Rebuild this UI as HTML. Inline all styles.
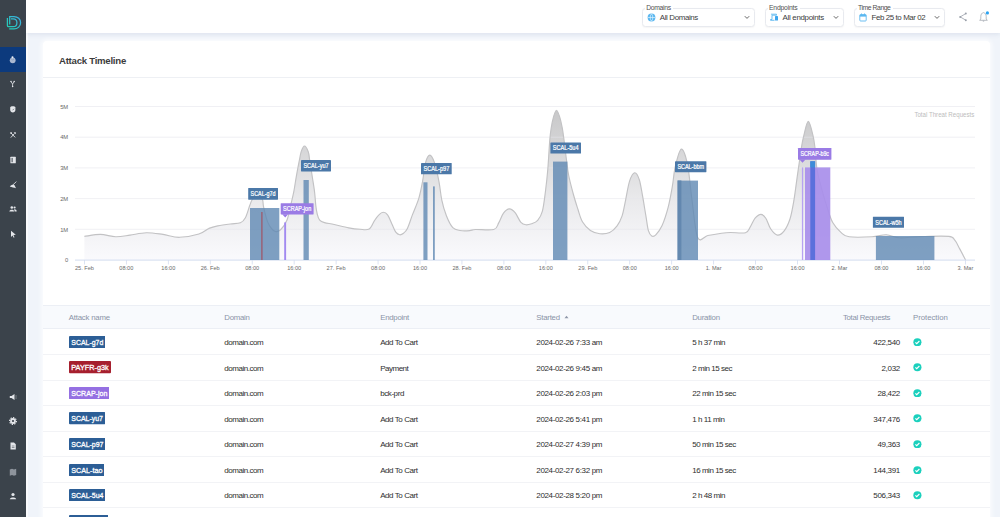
<!DOCTYPE html>
<html><head><meta charset="utf-8">
<style>
*{box-sizing:border-box;margin:0;padding:0}
html,body{width:1000px;height:517px;overflow:hidden;background:#f0f4fa;font-family:"Liberation Sans",sans-serif;color:#333}
.abs{position:absolute}
#side{left:0;top:0;width:26px;height:517px;background:#3b434b}
#active{left:0;top:47px;width:26px;height:25px;background:#0c3a7d}
#header{left:26px;top:0;width:974px;height:33px;background:#fff;box-shadow:0 1px 5px rgba(60,80,130,0.12)}
#card{left:43px;top:41px;width:947px;height:520px;background:#fff;border-radius:4px;box-shadow:0 0 4px 2px rgba(255,255,255,0.7)}
.sel{position:absolute;top:8px;height:18px;border:1px solid #e8e8ec;border-radius:3px;background:#fff}
.sel .lab{position:absolute;top:-5px;left:4px;font-size:6px;line-height:7px;color:#555;background:#fff;padding:0 1px}
.sel .val{position:absolute;top:4px;font-size:7.3px;line-height:9px;color:#444}
.chev{position:absolute;top:6.5px;width:4px;height:4px;border-right:1px solid #555;border-bottom:1px solid #555;transform:rotate(45deg)}
#title{left:59px;top:55px;font-size:9.6px;font-weight:bold;color:#3c3c3c;letter-spacing:-0.25px;line-height:12px}
#div1{left:43px;top:77px;width:947px;height:1px;background:#eef0f4}
#thead{left:43px;top:305px;width:947px;height:24px;background:#f8fafd;border-top:1px solid #eceff5;border-bottom:1px solid #eceff5}
.th{position:absolute;top:312px;font-size:7.3px;line-height:9px;color:#8d95a8}
.row{position:absolute;left:43px;width:947px;height:1px;background:#f2f3f6}
.td{position:absolute;font-size:7.1px;line-height:9px;color:#3a3a3a}
.badge{position:absolute;left:68.4px;height:12.6px;border-radius:1.5px;color:#fff;font-weight:bold;font-size:7.1px;line-height:12.6px;padding:0 2.6px;letter-spacing:-0.25px}
.b1{background:#2c5f96}.b2{background:#a3202e}.b3{background:#9270de}
.chk{position:absolute;left:913px;width:8px;height:8px;border-radius:50%;background:#21c7b3}
</style></head><body>
<div class="abs" style="left:26px;top:0;width:2px;height:517px;background:#fafbfd"></div>
<div id="side" class="abs"></div>
<div id="active" class="abs"></div>
<svg class="abs" style="left:0;top:0" width="26" height="33" viewBox="0 0 26 33"><defs><linearGradient id="lg" x1="6" y1="29" x2="21" y2="16" gradientUnits="userSpaceOnUse"><stop offset="0" stop-color="#1fd0ae"/><stop offset="1" stop-color="#3eaee8"/></linearGradient></defs><g fill="none" stroke="url(#lg)" stroke-width="1.25"><path d="M9.7,24.6 V16.5 H14 C17.8,16.5 20.6,19.3 20.6,22.7 C20.6,26.2 17.8,28.9 14,28.9 H9.2"/><path d="M7.4,18 V25.4 Q7.4,26.7 8.7,26.7 H13.2 C15.4,26.7 16.9,24.9 16.9,22.7 C16.9,20.5 15.4,18.8 13.2,18.8 H11"/></g></svg>
<svg class="abs" style="left:8px;top:55.0px" width="10" height="10" viewBox="0 0 10 10"><circle cx="4.7" cy="5.3" r="2.9" fill="#aab8d0"/><path d="M3.4,3.9 L4.7,5.3 L6,3.9" stroke="#7f90b0" stroke-width="0.5" fill="none"/><circle cx="4.5" cy="2.2" r="1" fill="#f0f3f8"/></svg>
<svg class="abs" style="left:8px;top:79.0px" width="10" height="10" viewBox="0 0 10 10"><path d="M3,2.6 L4.6,5 L6.2,2.6 M4.6,5 V7.4" stroke="#e4e6ea" stroke-width="0.8" fill="none"/><circle cx="3" cy="2.5" r="0.75" fill="#e4e6ea"/><circle cx="6.2" cy="2.5" r="0.75" fill="#e4e6ea"/><circle cx="4.6" cy="7.5" r="0.75" fill="#e4e6ea"/></svg>
<svg class="abs" style="left:8px;top:104.0px" width="10" height="10" viewBox="0 0 10 10"><path d="M2.2,3.6 C2.2,1.8 7.4,1.8 7.4,3.6 V5.8 C7.4,7.6 6.2,8.4 4.8,8.4 C3.4,8.4 2.2,7.6 2.2,5.8 Z" fill="#e4e6ea"/><path d="M4.5,6.3 L6,4.8" stroke="#3b434b" stroke-width="0.6"/></svg>
<svg class="abs" style="left:8px;top:129.5px" width="10" height="10" viewBox="0 0 10 10"><path d="M2.8,7.6 L6.6,3.4 M3,3 L7.2,7.4" stroke="#e4e6ea" stroke-width="0.9"/><path d="M5.6,2.2 L7.8,2.2 L7.8,4.2 Z" fill="#e4e6ea"/><path d="M1.9,2.8 L3.4,1.9 L4.2,3.2 L2.8,4 Z" fill="#e4e6ea"/></svg>
<svg class="abs" style="left:8px;top:154.8px" width="10" height="10" viewBox="0 0 10 10"><rect x="2.4" y="1.8" width="5.4" height="6.4" rx="0.5" fill="#e4e6ea"/><rect x="3.6" y="2.9" width="1" height="4.3" fill="#3b434b"/></svg>
<svg class="abs" style="left:8px;top:179.5px" width="10" height="10" viewBox="0 0 10 10"><path d="M1.8,6.6 C3,4.8 4.8,4.4 6.4,5 L8,8.2 C6,7.6 4,7.4 1.8,6.6 Z" fill="#e4e6ea"/><path d="M4.6,5.2 L8.4,1.6" stroke="#e4e6ea" stroke-width="0.8"/></svg>
<svg class="abs" style="left:8px;top:204.0px" width="10" height="10" viewBox="0 0 10 10"><circle cx="3.8" cy="3.5" r="1.3" fill="#e4e6ea"/><circle cx="6.6" cy="3.5" r="1.1" fill="#e4e6ea"/><path d="M1.3,7.6 C1.5,5.2 6.1,5.2 6.3,7.6 Z M6,5.3 C7.5,5 8.7,5.8 8.7,7.6 H6.8 Z" fill="#e4e6ea"/></svg>
<svg class="abs" style="left:8px;top:229.0px" width="10" height="10" viewBox="0 0 10 10"><path d="M3,1.8 L7.8,5.8 L5.4,6 L6.5,8.3 L5.7,8.7 L4.6,6.4 L3,8 Z" fill="#e4e6ea"/></svg>
<svg class="abs" style="left:8px;top:391.5px" width="10" height="10" viewBox="0 0 10 10"><path d="M1.8,4 H3.5 L6.5,2 V8 L3.5,6 H1.8 Z" fill="#e4e6ea"/><path d="M7.5,4 H8.6 M7.5,6 H8.6" stroke="#e4e6ea" stroke-width="0.6"/></svg>
<svg class="abs" style="left:8px;top:416.0px" width="10" height="10" viewBox="0 0 10 10"><circle cx="5" cy="5" r="2.9" fill="#e4e6ea"/><circle cx="5" cy="5" r="3.4" fill="none" stroke="#e4e6ea" stroke-width="1.2" stroke-dasharray="1.3 1.3"/><circle cx="5" cy="5" r="1.1" fill="#3b434b"/></svg>
<svg class="abs" style="left:8px;top:441.0px" width="10" height="10" viewBox="0 0 10 10"><path d="M2.5,1.5 H6 L7.8,3.3 V8.5 H2.5 Z" fill="#e4e6ea"/><path d="M3.8,5 H6.5 M3.8,6.5 H6.5" stroke="#3b434b" stroke-width="0.5"/></svg>
<svg class="abs" style="left:8px;top:466.5px" width="10" height="10" viewBox="0 0 10 10"><path d="M1.8,2.5 L4,1.8 L6,2.5 L8.2,1.8 V8 L6,8.7 L4,8 L1.8,8.7 Z" fill="#8e949c"/></svg>
<svg class="abs" style="left:8px;top:491.0px" width="10" height="10" viewBox="0 0 10 10"><circle cx="5" cy="3.5" r="1.6" fill="#e4e6ea"/><path d="M1.8,8.2 C2,5.8 8,5.8 8.2,8.2 Z" fill="#e4e6ea"/></svg>
<div id="header" class="abs">
</div>
<div class="abs" style="left:641.5px;top:8px;width:113.5px;height:18.6px;border:0.8px solid #e8eaef;border-radius:3.5px;background:#fff;box-shadow:0 0.5px 1.5px rgba(0,0,0,0.04)"></div><div class="abs" style="left:645.0px;top:6px;width:28.0px;height:4px;background:#fff"></div>
<div class="abs" style="left:646.20px;top:4.74px;font-size:6.80px;line-height:6.80px;color:#505050;font-weight:normal;letter-spacing:-0.33px;white-space:nowrap;">Domains</div>
<div class="abs" style="left:659.80px;top:13.91px;font-size:7.90px;line-height:7.90px;color:#3c3c3c;font-weight:normal;letter-spacing:-0.36px;white-space:nowrap;">All Domains</div>
<div class="abs" style="left:764.5px;top:8px;width:79.5px;height:18.6px;border:0.8px solid #e8eaef;border-radius:3.5px;background:#fff;box-shadow:0 0.5px 1.5px rgba(0,0,0,0.04)"></div><div class="abs" style="left:768.0px;top:6px;width:32.0px;height:4px;background:#fff"></div>
<div class="abs" style="left:769.00px;top:4.74px;font-size:6.80px;line-height:6.80px;color:#505050;font-weight:normal;letter-spacing:-0.19px;white-space:nowrap;">Endpoints</div>
<div class="abs" style="left:782.50px;top:13.91px;font-size:7.90px;line-height:7.90px;color:#3c3c3c;font-weight:normal;letter-spacing:-0.29px;white-space:nowrap;">All endpoints</div>
<div class="abs" style="left:853.7px;top:8px;width:91.5px;height:18.6px;border:0.8px solid #e8eaef;border-radius:3.5px;background:#fff;box-shadow:0 0.5px 1.5px rgba(0,0,0,0.04)"></div><div class="abs" style="left:857.2px;top:6px;width:36.0px;height:4px;background:#fff"></div>
<div class="abs" style="left:858.00px;top:4.74px;font-size:6.80px;line-height:6.80px;color:#505050;font-weight:normal;letter-spacing:-0.43px;white-space:nowrap;">Time Range</div>
<div class="abs" style="left:871.50px;top:13.91px;font-size:7.90px;line-height:7.90px;color:#3c3c3c;font-weight:normal;letter-spacing:-0.39px;white-space:nowrap;">Feb 25 to Mar 02</div>
<svg class="abs" style="left:743.5px;top:15px" width="6" height="5" viewBox="0 0 6 5"><path d="M0.8,1.2 L3,3.4 L5.2,1.2" fill="none" stroke="#555" stroke-width="0.9"/></svg>
<svg class="abs" style="left:832.8px;top:15px" width="6" height="5" viewBox="0 0 6 5"><path d="M0.8,1.2 L3,3.4 L5.2,1.2" fill="none" stroke="#555" stroke-width="0.9"/></svg>
<svg class="abs" style="left:934.0px;top:15px" width="6" height="5" viewBox="0 0 6 5"><path d="M0.8,1.2 L3,3.4 L5.2,1.2" fill="none" stroke="#555" stroke-width="0.9"/></svg>
<svg class="abs" style="left:646.5px;top:13px" width="9" height="9" viewBox="0 0 9 9"><circle cx="4.5" cy="4.5" r="3.9" fill="#5cb8f0"/><path d="M0.8,4.5 H8.2 M4.5,0.8 C2.8,2.5 2.8,6.5 4.5,8.2 M4.5,0.8 C6.2,2.5 6.2,6.5 4.5,8.2" stroke="#fff" stroke-width="0.55" fill="none"/></svg>
<svg class="abs" style="left:769.5px;top:13px" width="9" height="9" viewBox="0 0 9 9"><path d="M1,1.2 H6.5 V2.2 H2 V6.5 H0.5 V7.3 H4.5" stroke="#5cb8f0" stroke-width="0.9" fill="none"/><rect x="5" y="3" width="3" height="4.6" rx="0.6" fill="#3ea6ee"/></svg>
<svg class="abs" style="left:858.5px;top:13px" width="8" height="9" viewBox="0 0 8 9"><rect x="0.8" y="1.6" width="6.4" height="6.4" rx="0.8" fill="none" stroke="#5cb8f0" stroke-width="0.9"/><rect x="0.8" y="1.6" width="6.4" height="2" fill="#5cb8f0"/><rect x="2" y="0.4" width="0.8" height="1.6" fill="#5cb8f0"/><rect x="5.2" y="0.4" width="0.8" height="1.6" fill="#5cb8f0"/></svg>
<svg class="abs" style="left:958px;top:12px" width="10" height="10" viewBox="0 0 10 10"><path d="M7.8,1.6 L2.2,4.9 L7.8,8.2" stroke="#9aa0aa" stroke-width="0.8" fill="none"/><circle cx="7.8" cy="1.6" r="1" fill="#9aa0aa"/><circle cx="2.2" cy="4.9" r="1" fill="#9aa0aa"/><circle cx="7.8" cy="8.2" r="1" fill="#9aa0aa"/></svg>
<svg class="abs" style="left:978px;top:11px" width="12" height="12" viewBox="0 0 12 12"><path d="M5.5,1.6 C7.3,1.9 8.2,3.5 8.2,5.5 V8 L9.3,9.3 H1.7 L2.8,8 V5.5 C2.8,3.5 3.7,1.9 5.5,1.6 Z" fill="none" stroke="#a0a5ae" stroke-width="0.75"/><path d="M4.8,10.1 H6.2" stroke="#a0a5ae" stroke-width="0.8"/><circle cx="9.4" cy="1.9" r="1.6" fill="#2aa3f2"/></svg>
<div id="card" class="abs"></div>
<div id="title" class="abs">Attack Timeline</div>
<div id="div1" class="abs"></div>
<svg class="abs" style="left:0;top:0" width="1000" height="517" viewBox="0 0 1000 517">
<defs>
<linearGradient id="ag" x1="0" y1="106" x2="0" y2="260" gradientUnits="userSpaceOnUse">
<stop offset="0" stop-color="#c6c6c7"/>
<stop offset="0.6" stop-color="#e9e9eb"/>
<stop offset="1" stop-color="#fafafd"/>
</linearGradient>
</defs>
<path d="M84.4,236.4 C87.1,236.1 95.1,234.4 100.3,234.4 C105.5,234.4 110.8,236.6 115.7,236.7 C120.7,236.8 124.9,235.8 130.0,235.1 C135.1,234.4 141.0,232.9 146.5,232.8 C152.0,232.7 157.5,233.7 163.0,234.4 C168.5,235.2 173.5,237.4 179.5,237.3 C185.5,237.2 194.0,235.5 198.9,234.0 C203.8,232.5 205.8,229.8 208.9,228.4 C212.0,227.1 214.1,226.6 217.7,225.9 C221.3,225.2 226.5,224.5 230.3,224.0 C234.1,223.5 237.9,223.9 240.4,222.8 C242.9,221.8 243.8,220.6 245.4,217.7 C247.0,214.8 248.7,208.2 249.8,205.2 C251.0,202.2 251.1,201.4 252.3,199.5 C253.5,197.6 255.3,193.5 257.0,193.5 C258.7,193.5 261.3,197.2 262.4,199.5 C263.5,201.8 262.7,203.1 263.6,207.0 C264.5,210.9 266.2,218.8 268.0,222.8 C269.8,226.8 272.2,229.8 274.3,231.0 C276.4,232.2 278.5,231.5 280.6,229.7 C282.7,227.9 285.2,224.4 286.9,220.3 C288.6,216.2 289.6,209.9 290.7,205.2 C291.8,200.5 292.7,197.3 293.7,192.2 C294.7,187.1 295.6,180.2 296.6,174.8 C297.6,169.4 298.7,163.6 299.5,159.7 C300.3,155.8 300.4,153.9 301.2,151.6 C302.0,149.3 303.3,146.0 304.5,146.0 C305.7,146.0 307.3,149.3 308.2,151.6 C309.1,153.9 309.0,155.8 309.6,159.7 C310.2,163.6 311.2,169.6 312.0,175.0 C312.8,180.4 314.0,187.1 314.6,192.2 C315.2,197.3 315.4,201.9 315.8,205.6 C316.2,209.3 316.7,211.9 317.3,214.3 C317.9,216.7 318.5,218.7 319.7,220.1 C320.9,221.5 322.1,221.9 324.5,222.6 C326.9,223.3 330.2,223.6 334.2,224.5 C338.2,225.4 344.4,227.1 348.7,227.9 C353.0,228.7 356.6,229.1 360.0,229.3 C363.4,229.5 366.8,230.4 369.2,229.0 C371.6,227.6 372.9,223.0 374.5,220.6 C376.1,218.2 377.4,216.2 378.9,214.8 C380.3,213.4 381.8,212.2 383.2,212.2 C384.6,212.2 386.2,212.8 387.6,214.8 C389.1,216.8 390.5,221.1 391.9,224.0 C393.3,226.9 394.5,230.4 395.8,232.2 C397.1,234.0 398.4,234.6 399.7,234.8 C401.0,235.0 402.2,234.3 403.5,233.2 C404.8,232.1 405.9,231.4 407.4,228.4 C408.9,225.4 410.5,219.9 412.4,214.9 C414.3,209.9 417.1,203.8 418.8,198.3 C420.5,192.8 421.4,187.8 422.5,181.8 C423.6,175.8 424.4,166.9 425.6,162.5 C426.8,158.1 428.3,155.1 429.8,155.1 C431.3,155.1 432.9,158.1 434.4,162.5 C435.9,166.9 437.8,175.5 439.0,181.8 C440.2,188.1 440.6,194.4 441.8,200.1 C443.0,205.8 444.6,211.2 446.4,215.8 C448.2,220.4 450.5,225.2 452.8,227.7 C455.1,230.1 457.3,230.0 460.1,230.5 C462.9,231.0 467.1,230.8 469.7,230.6 C472.3,230.4 471.5,229.7 475.5,229.5 C479.5,229.3 489.9,230.6 493.8,229.5 C497.7,228.4 497.1,225.6 498.7,222.9 C500.3,220.2 501.7,215.5 503.5,213.2 C505.3,210.9 507.4,209.0 509.3,208.9 C511.2,208.8 513.2,210.4 515.1,212.7 C517.0,214.9 519.1,220.4 520.9,222.4 C522.7,224.4 524.0,224.6 525.8,224.8 C527.6,225.0 529.6,224.5 531.6,223.8 C533.6,223.1 535.9,222.5 537.7,220.4 C539.5,218.3 541.1,216.0 542.4,211.1 C543.7,206.2 544.6,198.0 545.5,191.0 C546.4,184.0 547.1,177.8 547.8,169.3 C548.5,160.8 549.2,146.7 549.8,139.8 C550.4,133.0 550.6,132.1 551.2,128.2 C551.8,124.3 552.7,119.6 553.6,116.6 C554.5,113.6 555.5,110.2 556.5,110.2 C557.5,110.2 558.6,113.6 559.6,116.6 C560.6,119.6 561.6,124.3 562.3,128.2 C563.0,132.1 563.3,134.5 564.0,139.8 C564.7,145.1 565.7,154.1 566.5,160.0 C567.3,165.9 567.6,169.8 568.7,175.5 C569.8,181.2 571.8,188.3 573.3,194.0 C574.8,199.7 576.5,204.8 578.0,209.5 C579.5,214.2 580.5,218.5 582.6,222.0 C584.7,225.5 587.5,228.5 590.4,230.4 C593.3,232.3 596.7,233.4 599.9,233.7 C603.1,234.0 606.8,233.7 609.7,232.4 C612.6,231.1 615.0,228.6 617.1,225.8 C619.2,223.1 620.7,220.0 622.1,215.9 C623.5,211.8 624.2,206.8 625.4,201.1 C626.6,195.3 628.0,186.1 629.5,181.4 C631.0,176.7 633.1,173.1 634.7,172.8 C636.3,172.5 638.0,175.8 639.3,179.7 C640.6,183.6 641.5,190.2 642.6,196.2 C643.7,202.2 644.9,210.2 645.9,215.9 C646.9,221.7 647.4,227.3 648.4,230.7 C649.4,234.0 650.5,235.3 651.7,236.0 C652.9,236.7 654.1,236.6 655.8,234.8 C657.5,233.0 660.0,230.0 662.1,225.4 C664.2,220.8 666.5,213.6 668.2,207.1 C669.9,200.6 671.1,193.5 672.3,186.7 C673.5,179.9 673.8,172.7 675.3,166.4 C676.8,160.1 679.4,149.4 681.4,149.1 C683.4,148.8 685.7,155.9 687.5,164.4 C689.3,172.9 690.3,187.8 692.0,200.0 C693.7,212.2 695.1,231.7 697.7,237.6 C700.3,243.5 704.1,236.2 707.8,235.5 C711.5,234.8 716.3,234.0 720.0,233.5 C723.7,233.0 726.0,232.6 730.2,232.5 C734.5,232.4 742.1,233.6 745.5,232.7 C748.9,231.8 748.7,229.3 750.3,226.9 C751.9,224.5 753.3,220.3 755.1,218.2 C756.9,216.1 759.1,214.3 760.9,214.3 C762.7,214.3 764.2,215.8 765.8,218.2 C767.4,220.6 768.7,226.0 770.6,228.8 C772.5,231.6 775.1,234.8 777.4,235.1 C779.7,235.4 782.1,233.5 784.2,230.8 C786.3,228.2 788.4,223.6 789.9,219.2 C791.4,214.8 792.2,209.6 793.2,204.4 C794.2,199.2 794.9,193.8 795.7,188.0 C796.5,182.2 797.2,176.6 798.2,169.9 C799.2,163.2 800.5,153.5 801.4,147.7 C802.3,141.9 802.8,139.6 803.9,135.2 C805.0,130.8 806.8,121.3 808.3,121.3 C809.8,121.3 811.8,130.8 812.9,135.2 C814.0,139.6 814.3,141.9 815.0,147.7 C815.7,153.5 815.8,162.4 817.1,169.9 C818.4,177.4 821.0,186.3 822.8,192.9 C824.6,199.5 826.1,204.4 827.8,209.3 C829.4,214.2 830.5,218.7 832.7,222.5 C834.9,226.3 838.2,230.0 840.9,232.4 C843.6,234.8 843.9,236.1 849.1,236.8 C854.3,237.5 865.8,237.1 872.0,236.8 C878.2,236.5 881.8,234.6 886.4,234.8 C891.0,235.0 894.0,237.5 899.6,237.8 C905.2,238.1 911.8,236.8 920.0,236.6 C928.2,236.4 943.0,235.8 948.8,236.4 C954.6,237.0 953.0,238.2 954.8,240.2 C956.6,242.2 957.8,245.3 959.6,248.6 C961.4,251.9 964.6,258.1 965.6,260.0 L965.5,260 L84.4,260 Z" fill="url(#ag)"/>
<rect x="75" y="228.80" width="900" height="1" fill="#e6e6ec" fill-opacity="0.58"/>
<rect x="75" y="198.10" width="900" height="1" fill="#e6e6ec" fill-opacity="0.58"/>
<rect x="75" y="167.40" width="900" height="1" fill="#e6e6ec" fill-opacity="0.58"/>
<rect x="75" y="136.70" width="900" height="1" fill="#e6e6ec" fill-opacity="0.58"/>
<rect x="75" y="106.00" width="900" height="1" fill="#e6e6ec" fill-opacity="0.58"/>
<path d="M84.4,236.4 C87.1,236.1 95.1,234.4 100.3,234.4 C105.5,234.4 110.8,236.6 115.7,236.7 C120.7,236.8 124.9,235.8 130.0,235.1 C135.1,234.4 141.0,232.9 146.5,232.8 C152.0,232.7 157.5,233.7 163.0,234.4 C168.5,235.2 173.5,237.4 179.5,237.3 C185.5,237.2 194.0,235.5 198.9,234.0 C203.8,232.5 205.8,229.8 208.9,228.4 C212.0,227.1 214.1,226.6 217.7,225.9 C221.3,225.2 226.5,224.5 230.3,224.0 C234.1,223.5 237.9,223.9 240.4,222.8 C242.9,221.8 243.8,220.6 245.4,217.7 C247.0,214.8 248.7,208.2 249.8,205.2 C251.0,202.2 251.1,201.4 252.3,199.5 C253.5,197.6 255.3,193.5 257.0,193.5 C258.7,193.5 261.3,197.2 262.4,199.5 C263.5,201.8 262.7,203.1 263.6,207.0 C264.5,210.9 266.2,218.8 268.0,222.8 C269.8,226.8 272.2,229.8 274.3,231.0 C276.4,232.2 278.5,231.5 280.6,229.7 C282.7,227.9 285.2,224.4 286.9,220.3 C288.6,216.2 289.6,209.9 290.7,205.2 C291.8,200.5 292.7,197.3 293.7,192.2 C294.7,187.1 295.6,180.2 296.6,174.8 C297.6,169.4 298.7,163.6 299.5,159.7 C300.3,155.8 300.4,153.9 301.2,151.6 C302.0,149.3 303.3,146.0 304.5,146.0 C305.7,146.0 307.3,149.3 308.2,151.6 C309.1,153.9 309.0,155.8 309.6,159.7 C310.2,163.6 311.2,169.6 312.0,175.0 C312.8,180.4 314.0,187.1 314.6,192.2 C315.2,197.3 315.4,201.9 315.8,205.6 C316.2,209.3 316.7,211.9 317.3,214.3 C317.9,216.7 318.5,218.7 319.7,220.1 C320.9,221.5 322.1,221.9 324.5,222.6 C326.9,223.3 330.2,223.6 334.2,224.5 C338.2,225.4 344.4,227.1 348.7,227.9 C353.0,228.7 356.6,229.1 360.0,229.3 C363.4,229.5 366.8,230.4 369.2,229.0 C371.6,227.6 372.9,223.0 374.5,220.6 C376.1,218.2 377.4,216.2 378.9,214.8 C380.3,213.4 381.8,212.2 383.2,212.2 C384.6,212.2 386.2,212.8 387.6,214.8 C389.1,216.8 390.5,221.1 391.9,224.0 C393.3,226.9 394.5,230.4 395.8,232.2 C397.1,234.0 398.4,234.6 399.7,234.8 C401.0,235.0 402.2,234.3 403.5,233.2 C404.8,232.1 405.9,231.4 407.4,228.4 C408.9,225.4 410.5,219.9 412.4,214.9 C414.3,209.9 417.1,203.8 418.8,198.3 C420.5,192.8 421.4,187.8 422.5,181.8 C423.6,175.8 424.4,166.9 425.6,162.5 C426.8,158.1 428.3,155.1 429.8,155.1 C431.3,155.1 432.9,158.1 434.4,162.5 C435.9,166.9 437.8,175.5 439.0,181.8 C440.2,188.1 440.6,194.4 441.8,200.1 C443.0,205.8 444.6,211.2 446.4,215.8 C448.2,220.4 450.5,225.2 452.8,227.7 C455.1,230.1 457.3,230.0 460.1,230.5 C462.9,231.0 467.1,230.8 469.7,230.6 C472.3,230.4 471.5,229.7 475.5,229.5 C479.5,229.3 489.9,230.6 493.8,229.5 C497.7,228.4 497.1,225.6 498.7,222.9 C500.3,220.2 501.7,215.5 503.5,213.2 C505.3,210.9 507.4,209.0 509.3,208.9 C511.2,208.8 513.2,210.4 515.1,212.7 C517.0,214.9 519.1,220.4 520.9,222.4 C522.7,224.4 524.0,224.6 525.8,224.8 C527.6,225.0 529.6,224.5 531.6,223.8 C533.6,223.1 535.9,222.5 537.7,220.4 C539.5,218.3 541.1,216.0 542.4,211.1 C543.7,206.2 544.6,198.0 545.5,191.0 C546.4,184.0 547.1,177.8 547.8,169.3 C548.5,160.8 549.2,146.7 549.8,139.8 C550.4,133.0 550.6,132.1 551.2,128.2 C551.8,124.3 552.7,119.6 553.6,116.6 C554.5,113.6 555.5,110.2 556.5,110.2 C557.5,110.2 558.6,113.6 559.6,116.6 C560.6,119.6 561.6,124.3 562.3,128.2 C563.0,132.1 563.3,134.5 564.0,139.8 C564.7,145.1 565.7,154.1 566.5,160.0 C567.3,165.9 567.6,169.8 568.7,175.5 C569.8,181.2 571.8,188.3 573.3,194.0 C574.8,199.7 576.5,204.8 578.0,209.5 C579.5,214.2 580.5,218.5 582.6,222.0 C584.7,225.5 587.5,228.5 590.4,230.4 C593.3,232.3 596.7,233.4 599.9,233.7 C603.1,234.0 606.8,233.7 609.7,232.4 C612.6,231.1 615.0,228.6 617.1,225.8 C619.2,223.1 620.7,220.0 622.1,215.9 C623.5,211.8 624.2,206.8 625.4,201.1 C626.6,195.3 628.0,186.1 629.5,181.4 C631.0,176.7 633.1,173.1 634.7,172.8 C636.3,172.5 638.0,175.8 639.3,179.7 C640.6,183.6 641.5,190.2 642.6,196.2 C643.7,202.2 644.9,210.2 645.9,215.9 C646.9,221.7 647.4,227.3 648.4,230.7 C649.4,234.0 650.5,235.3 651.7,236.0 C652.9,236.7 654.1,236.6 655.8,234.8 C657.5,233.0 660.0,230.0 662.1,225.4 C664.2,220.8 666.5,213.6 668.2,207.1 C669.9,200.6 671.1,193.5 672.3,186.7 C673.5,179.9 673.8,172.7 675.3,166.4 C676.8,160.1 679.4,149.4 681.4,149.1 C683.4,148.8 685.7,155.9 687.5,164.4 C689.3,172.9 690.3,187.8 692.0,200.0 C693.7,212.2 695.1,231.7 697.7,237.6 C700.3,243.5 704.1,236.2 707.8,235.5 C711.5,234.8 716.3,234.0 720.0,233.5 C723.7,233.0 726.0,232.6 730.2,232.5 C734.5,232.4 742.1,233.6 745.5,232.7 C748.9,231.8 748.7,229.3 750.3,226.9 C751.9,224.5 753.3,220.3 755.1,218.2 C756.9,216.1 759.1,214.3 760.9,214.3 C762.7,214.3 764.2,215.8 765.8,218.2 C767.4,220.6 768.7,226.0 770.6,228.8 C772.5,231.6 775.1,234.8 777.4,235.1 C779.7,235.4 782.1,233.5 784.2,230.8 C786.3,228.2 788.4,223.6 789.9,219.2 C791.4,214.8 792.2,209.6 793.2,204.4 C794.2,199.2 794.9,193.8 795.7,188.0 C796.5,182.2 797.2,176.6 798.2,169.9 C799.2,163.2 800.5,153.5 801.4,147.7 C802.3,141.9 802.8,139.6 803.9,135.2 C805.0,130.8 806.8,121.3 808.3,121.3 C809.8,121.3 811.8,130.8 812.9,135.2 C814.0,139.6 814.3,141.9 815.0,147.7 C815.7,153.5 815.8,162.4 817.1,169.9 C818.4,177.4 821.0,186.3 822.8,192.9 C824.6,199.5 826.1,204.4 827.8,209.3 C829.4,214.2 830.5,218.7 832.7,222.5 C834.9,226.3 838.2,230.0 840.9,232.4 C843.6,234.8 843.9,236.1 849.1,236.8 C854.3,237.5 865.8,237.1 872.0,236.8 C878.2,236.5 881.8,234.6 886.4,234.8 C891.0,235.0 894.0,237.5 899.6,237.8 C905.2,238.1 911.8,236.8 920.0,236.6 C928.2,236.4 943.0,235.8 948.8,236.4 C954.6,237.0 953.0,238.2 954.8,240.2 C956.6,242.2 957.8,245.3 959.6,248.6 C961.4,251.9 964.6,258.1 965.6,260.0" fill="none" stroke="#c2c2c4" stroke-width="1.15"/>
<rect x="75" y="259.6" width="900" height="1" fill="#d3dcef"/>
<rect x="84.00" y="260" width="0.8" height="4.5" fill="#d3dcef"/>
<text x="84.40" y="269.80" font-size="5.60" fill="#6a6a6a" font-weight="normal" text-anchor="middle" letter-spacing="0.00">25. Feb</text>
<rect x="125.95" y="260" width="0.8" height="4.5" fill="#d3dcef"/>
<text x="126.35" y="269.80" font-size="5.60" fill="#6a6a6a" font-weight="normal" text-anchor="middle" letter-spacing="0.00">08:00</text>
<rect x="167.90" y="260" width="0.8" height="4.5" fill="#d3dcef"/>
<text x="168.30" y="269.80" font-size="5.60" fill="#6a6a6a" font-weight="normal" text-anchor="middle" letter-spacing="0.00">16:00</text>
<rect x="209.85" y="260" width="0.8" height="4.5" fill="#d3dcef"/>
<text x="210.25" y="269.80" font-size="5.60" fill="#6a6a6a" font-weight="normal" text-anchor="middle" letter-spacing="0.00">26. Feb</text>
<rect x="251.80" y="260" width="0.8" height="4.5" fill="#d3dcef"/>
<text x="252.20" y="269.80" font-size="5.60" fill="#6a6a6a" font-weight="normal" text-anchor="middle" letter-spacing="0.00">08:00</text>
<rect x="293.75" y="260" width="0.8" height="4.5" fill="#d3dcef"/>
<text x="294.15" y="269.80" font-size="5.60" fill="#6a6a6a" font-weight="normal" text-anchor="middle" letter-spacing="0.00">16:00</text>
<rect x="335.70" y="260" width="0.8" height="4.5" fill="#d3dcef"/>
<text x="336.10" y="269.80" font-size="5.60" fill="#6a6a6a" font-weight="normal" text-anchor="middle" letter-spacing="0.00">27. Feb</text>
<rect x="377.65" y="260" width="0.8" height="4.5" fill="#d3dcef"/>
<text x="378.05" y="269.80" font-size="5.60" fill="#6a6a6a" font-weight="normal" text-anchor="middle" letter-spacing="0.00">08:00</text>
<rect x="419.60" y="260" width="0.8" height="4.5" fill="#d3dcef"/>
<text x="420.00" y="269.80" font-size="5.60" fill="#6a6a6a" font-weight="normal" text-anchor="middle" letter-spacing="0.00">16:00</text>
<rect x="461.55" y="260" width="0.8" height="4.5" fill="#d3dcef"/>
<text x="461.95" y="269.80" font-size="5.60" fill="#6a6a6a" font-weight="normal" text-anchor="middle" letter-spacing="0.00">28. Feb</text>
<rect x="503.50" y="260" width="0.8" height="4.5" fill="#d3dcef"/>
<text x="503.90" y="269.80" font-size="5.60" fill="#6a6a6a" font-weight="normal" text-anchor="middle" letter-spacing="0.00">08:00</text>
<rect x="545.45" y="260" width="0.8" height="4.5" fill="#d3dcef"/>
<text x="545.85" y="269.80" font-size="5.60" fill="#6a6a6a" font-weight="normal" text-anchor="middle" letter-spacing="0.00">16:00</text>
<rect x="587.40" y="260" width="0.8" height="4.5" fill="#d3dcef"/>
<text x="587.80" y="269.80" font-size="5.60" fill="#6a6a6a" font-weight="normal" text-anchor="middle" letter-spacing="0.00">29. Feb</text>
<rect x="629.35" y="260" width="0.8" height="4.5" fill="#d3dcef"/>
<text x="629.75" y="269.80" font-size="5.60" fill="#6a6a6a" font-weight="normal" text-anchor="middle" letter-spacing="0.00">08:00</text>
<rect x="671.30" y="260" width="0.8" height="4.5" fill="#d3dcef"/>
<text x="671.70" y="269.80" font-size="5.60" fill="#6a6a6a" font-weight="normal" text-anchor="middle" letter-spacing="0.00">16:00</text>
<rect x="713.25" y="260" width="0.8" height="4.5" fill="#d3dcef"/>
<text x="713.65" y="269.80" font-size="5.60" fill="#6a6a6a" font-weight="normal" text-anchor="middle" letter-spacing="0.00">1. Mar</text>
<rect x="755.20" y="260" width="0.8" height="4.5" fill="#d3dcef"/>
<text x="755.60" y="269.80" font-size="5.60" fill="#6a6a6a" font-weight="normal" text-anchor="middle" letter-spacing="0.00">08:00</text>
<rect x="797.15" y="260" width="0.8" height="4.5" fill="#d3dcef"/>
<text x="797.55" y="269.80" font-size="5.60" fill="#6a6a6a" font-weight="normal" text-anchor="middle" letter-spacing="0.00">16:00</text>
<rect x="839.10" y="260" width="0.8" height="4.5" fill="#d3dcef"/>
<text x="839.50" y="269.80" font-size="5.60" fill="#6a6a6a" font-weight="normal" text-anchor="middle" letter-spacing="0.00">2. Mar</text>
<rect x="881.05" y="260" width="0.8" height="4.5" fill="#d3dcef"/>
<text x="881.45" y="269.80" font-size="5.60" fill="#6a6a6a" font-weight="normal" text-anchor="middle" letter-spacing="0.00">08:00</text>
<rect x="923.00" y="260" width="0.8" height="4.5" fill="#d3dcef"/>
<text x="923.40" y="269.80" font-size="5.60" fill="#6a6a6a" font-weight="normal" text-anchor="middle" letter-spacing="0.00">16:00</text>
<rect x="964.95" y="260" width="0.8" height="4.5" fill="#d3dcef"/>
<text x="965.35" y="269.80" font-size="5.60" fill="#6a6a6a" font-weight="normal" text-anchor="middle" letter-spacing="0.00">3. Mar</text>
<text x="68.20" y="262.20" font-size="5.80" fill="#6a6a6a" font-weight="normal" text-anchor="end" letter-spacing="0.00">0</text>
<text x="68.20" y="231.50" font-size="5.80" fill="#6a6a6a" font-weight="normal" text-anchor="end" letter-spacing="0.00">1M</text>
<text x="68.20" y="200.80" font-size="5.80" fill="#6a6a6a" font-weight="normal" text-anchor="end" letter-spacing="0.00">2M</text>
<text x="68.20" y="170.10" font-size="5.80" fill="#6a6a6a" font-weight="normal" text-anchor="end" letter-spacing="0.00">3M</text>
<text x="68.20" y="139.40" font-size="5.80" fill="#6a6a6a" font-weight="normal" text-anchor="end" letter-spacing="0.00">4M</text>
<text x="68.20" y="108.70" font-size="5.80" fill="#6a6a6a" font-weight="normal" text-anchor="end" letter-spacing="0.00">5M</text>
<text x="914.4" y="116.9" font-size="6.6" fill="#bdbdbd" textLength="59.9" lengthAdjust="spacingAndGlyphs">Total Threat Requests</text>
<rect x="250.00" y="208.00" width="29.30" height="52.00" fill="#5f88b3" fill-opacity="0.80"/>
<rect x="261.00" y="212.00" width="1.70" height="48.00" fill="#96697f" fill-opacity="1.00"/>
<rect x="284.20" y="222.40" width="1.90" height="37.60" fill="#a28af0" fill-opacity="1.00"/>
<rect x="303.50" y="180.00" width="5.30" height="80.00" fill="#5f88b3" fill-opacity="0.80"/>
<rect x="423.40" y="182.30" width="4.10" height="77.70" fill="#5f88b3" fill-opacity="0.80"/>
<rect x="433.00" y="186.40" width="1.80" height="73.60" fill="#5f88b3" fill-opacity="0.80"/>
<rect x="553.00" y="161.60" width="14.40" height="98.40" fill="#5f88b3" fill-opacity="0.80"/>
<rect x="677.40" y="180.60" width="20.60" height="79.40" fill="#5f88b3" fill-opacity="0.80"/>
<rect x="677.60" y="180.20" width="3.80" height="79.80" fill="#4f77a3" fill-opacity="0.55"/>
<rect x="801.90" y="167.40" width="1.30" height="92.60" fill="#b7a3f0" fill-opacity="1.00"/>
<rect x="805.00" y="167.40" width="25.30" height="92.60" fill="#a88eea" fill-opacity="0.92"/>
<rect x="810.30" y="161.30" width="4.80" height="98.70" fill="#5b70dc" fill-opacity="1.00"/>
<rect x="810.3" y="161.3" width="4.8" height="6.1" fill="#3e8cd8"/>
<rect x="875.90" y="236.00" width="58.50" height="24.00" fill="#5f88b3" fill-opacity="0.80"/>
<rect x="248.20" y="187.90" width="29.80" height="11.80" fill="#4b78a8" rx="0.4"/><text x="250.60" y="196.05" font-size="6.3" fill="#fff" stroke="#fff" stroke-width="0.22" textLength="25.00" lengthAdjust="spacingAndGlyphs">SCAL-g7d</text>
<rect x="280.70" y="203.20" width="32.90" height="11.30" fill="#9a7be5" rx="0.4"/><path d="M282.20,214.30 L285.20,217.50 L288.20,214.30 Z" fill="#9a7be5"/><text x="283.10" y="211.10" font-size="6.3" fill="#fff" stroke="#fff" stroke-width="0.22" textLength="28.10" lengthAdjust="spacingAndGlyphs">SCRAP-jon</text>
<rect x="301.00" y="160.00" width="30.00" height="11.40" fill="#4b78a8" rx="0.4"/><text x="303.40" y="167.95" font-size="6.3" fill="#fff" stroke="#fff" stroke-width="0.22" textLength="25.20" lengthAdjust="spacingAndGlyphs">SCAL-yu7</text>
<rect x="421.00" y="163.00" width="30.70" height="11.30" fill="#4b78a8" rx="0.4"/><text x="423.40" y="170.90" font-size="6.3" fill="#fff" stroke="#fff" stroke-width="0.22" textLength="25.90" lengthAdjust="spacingAndGlyphs">SCAL-p97</text>
<rect x="550.40" y="142.50" width="30.60" height="11.10" fill="#4b78a8" rx="0.4"/><text x="552.80" y="150.30" font-size="6.3" fill="#fff" stroke="#fff" stroke-width="0.22" textLength="25.80" lengthAdjust="spacingAndGlyphs">SCAL-5u4</text>
<rect x="675.00" y="161.30" width="31.40" height="10.90" fill="#4b78a8" rx="0.4"/><text x="677.40" y="169.00" font-size="6.3" fill="#fff" stroke="#fff" stroke-width="0.22" textLength="26.60" lengthAdjust="spacingAndGlyphs">SCAL-bbm</text>
<rect x="798.00" y="148.00" width="33.40" height="11.70" fill="#9a7be5" rx="0.4"/><path d="M799.50,159.50 L802.50,162.70 L805.50,159.50 Z" fill="#9a7be5"/><text x="800.40" y="156.10" font-size="6.3" fill="#fff" stroke="#fff" stroke-width="0.22" textLength="28.60" lengthAdjust="spacingAndGlyphs">SCRAP-b9c</text>
<rect x="872.90" y="216.70" width="31.10" height="11.10" fill="#4b78a8" rx="0.4"/><text x="875.30" y="224.50" font-size="6.3" fill="#fff" stroke="#fff" stroke-width="0.22" textLength="26.30" lengthAdjust="spacingAndGlyphs">SCAL-w5h</text>
</svg>
<div id="thead" class="abs"></div>
<div class="abs" style="left:68.70px;top:314.00px;font-size:7.80px;line-height:7.80px;color:#8a93a7;font-weight:normal;letter-spacing:-0.19px;white-space:nowrap;">Attack name</div>
<div class="abs" style="left:224.30px;top:314.00px;font-size:7.80px;line-height:7.80px;color:#8a93a7;font-weight:normal;letter-spacing:-0.29px;white-space:nowrap;">Domain</div>
<div class="abs" style="left:380.20px;top:314.00px;font-size:7.80px;line-height:7.80px;color:#8a93a7;font-weight:normal;letter-spacing:-0.25px;white-space:nowrap;">Endpoint</div>
<div class="abs" style="left:536.30px;top:314.00px;font-size:7.80px;line-height:7.80px;color:#8a93a7;font-weight:normal;letter-spacing:-0.23px;white-space:nowrap;">Started</div>
<svg class="abs" style="left:563.5px;top:315px" width="5" height="4" viewBox="0 0 5 4"><path d="M0.5,3.2 L2.5,0.8 L4.5,3.2 Z" fill="#8e96a8"/></svg>
<div class="abs" style="left:692.20px;top:314.00px;font-size:7.80px;line-height:7.80px;color:#8a93a7;font-weight:normal;letter-spacing:-0.24px;white-space:nowrap;">Duration</div>
<div class="abs" style="left:890.20px;top:314.00px;font-size:7.80px;line-height:7.80px;color:#8a93a7;font-weight:normal;letter-spacing:-0.31px;white-space:nowrap;transform:translateX(-100%)">Total Requests</div>
<div class="abs" style="left:913.00px;top:314.00px;font-size:7.80px;line-height:7.80px;color:#8a93a7;font-weight:normal;letter-spacing:-0.03px;white-space:nowrap;">Protection</div>
<div class="row" style="top:354.00px"></div>
<svg class="abs" style="left:68.7px;top:335.70px" width="36.60" height="12.3" viewBox="0 0 36.60 12.3"><rect x="0" y="0" width="36.60" height="12.3" rx="1" fill="#2c5e96"/><text x="2.3" y="9.15" font-size="7.7" fill="#fff" stroke="#fff" stroke-width="0.3" textLength="32.00" lengthAdjust="spacingAndGlyphs">SCAL-g7d</text></svg>
<div class="abs" style="left:224.30px;top:338.93px;font-size:8.00px;line-height:8.00px;color:#2e2e2e;font-weight:normal;letter-spacing:-0.48px;white-space:nowrap;">domain.com</div>
<div class="abs" style="left:380.20px;top:338.93px;font-size:8.00px;line-height:8.00px;color:#2e2e2e;font-weight:normal;letter-spacing:-0.43px;white-space:nowrap;">Add To Cart</div>
<div class="abs" style="left:536.30px;top:338.93px;font-size:8.00px;line-height:8.00px;color:#2e2e2e;font-weight:normal;letter-spacing:-0.35px;white-space:nowrap;">2024-02-26 7:33 am</div>
<div class="abs" style="left:692.20px;top:338.93px;font-size:8.00px;line-height:8.00px;color:#2e2e2e;font-weight:normal;letter-spacing:-0.46px;white-space:nowrap;">5 h 37 min</div>
<div class="abs" style="left:899.90px;top:338.93px;font-size:8.00px;line-height:8.00px;color:#2e2e2e;font-weight:normal;letter-spacing:-0.33px;white-space:nowrap;transform:translateX(-100%)">422,540</div>
<svg class="abs" style="left:913px;top:337.60px" width="8.5" height="8.5" viewBox="0 0 8.5 8.5"><circle cx="4.4" cy="4.2" r="4.05" fill="#1bd0bd"/><path d="M2.4,4.4 L3.7,5.6 L6.4,3" stroke="#fff" stroke-width="1.15" fill="none"/></svg>
<div class="row" style="top:379.58px"></div>
<svg class="abs" style="left:68.7px;top:361.28px" width="42.00" height="12.3" viewBox="0 0 42.00 12.3"><rect x="0" y="0" width="42.00" height="12.3" rx="1" fill="#a61f2e"/><text x="2.3" y="9.15" font-size="7.7" fill="#fff" stroke="#fff" stroke-width="0.3" textLength="37.40" lengthAdjust="spacingAndGlyphs">PAYFR-g3k</text></svg>
<div class="abs" style="left:224.30px;top:364.51px;font-size:8.00px;line-height:8.00px;color:#2e2e2e;font-weight:normal;letter-spacing:-0.48px;white-space:nowrap;">domain.com</div>
<div class="abs" style="left:380.20px;top:364.51px;font-size:8.00px;line-height:8.00px;color:#2e2e2e;font-weight:normal;letter-spacing:-0.50px;white-space:nowrap;">Payment</div>
<div class="abs" style="left:536.30px;top:364.51px;font-size:8.00px;line-height:8.00px;color:#2e2e2e;font-weight:normal;letter-spacing:-0.35px;white-space:nowrap;">2024-02-26 9:45 am</div>
<div class="abs" style="left:692.20px;top:364.51px;font-size:8.00px;line-height:8.00px;color:#2e2e2e;font-weight:normal;letter-spacing:-0.46px;white-space:nowrap;">2 min 15 sec</div>
<div class="abs" style="left:899.90px;top:364.51px;font-size:8.00px;line-height:8.00px;color:#2e2e2e;font-weight:normal;letter-spacing:-0.32px;white-space:nowrap;transform:translateX(-100%)">2,032</div>
<svg class="abs" style="left:913px;top:363.18px" width="8.5" height="8.5" viewBox="0 0 8.5 8.5"><circle cx="4.4" cy="4.2" r="4.05" fill="#1bd0bd"/><path d="M2.4,4.4 L3.7,5.6 L6.4,3" stroke="#fff" stroke-width="1.15" fill="none"/></svg>
<div class="row" style="top:405.16px"></div>
<svg class="abs" style="left:68.7px;top:386.86px" width="40.70" height="12.3" viewBox="0 0 40.70 12.3"><rect x="0" y="0" width="40.70" height="12.3" rx="1" fill="#9570e2"/><text x="2.3" y="9.15" font-size="7.7" fill="#fff" stroke="#fff" stroke-width="0.3" textLength="36.10" lengthAdjust="spacingAndGlyphs">SCRAP-jon</text></svg>
<div class="abs" style="left:224.30px;top:390.09px;font-size:8.00px;line-height:8.00px;color:#2e2e2e;font-weight:normal;letter-spacing:-0.48px;white-space:nowrap;">domain.com</div>
<div class="abs" style="left:380.20px;top:390.09px;font-size:8.00px;line-height:8.00px;color:#2e2e2e;font-weight:normal;letter-spacing:-0.42px;white-space:nowrap;">bck-prd</div>
<div class="abs" style="left:536.30px;top:390.09px;font-size:8.00px;line-height:8.00px;color:#2e2e2e;font-weight:normal;letter-spacing:-0.35px;white-space:nowrap;">2024-02-26 2:03 pm</div>
<div class="abs" style="left:692.20px;top:390.09px;font-size:8.00px;line-height:8.00px;color:#2e2e2e;font-weight:normal;letter-spacing:-0.47px;white-space:nowrap;">22 min 15 sec</div>
<div class="abs" style="left:899.90px;top:390.09px;font-size:8.00px;line-height:8.00px;color:#2e2e2e;font-weight:normal;letter-spacing:-0.33px;white-space:nowrap;transform:translateX(-100%)">28,422</div>
<svg class="abs" style="left:913px;top:388.76px" width="8.5" height="8.5" viewBox="0 0 8.5 8.5"><circle cx="4.4" cy="4.2" r="4.05" fill="#1bd0bd"/><path d="M2.4,4.4 L3.7,5.6 L6.4,3" stroke="#fff" stroke-width="1.15" fill="none"/></svg>
<div class="row" style="top:430.74px"></div>
<svg class="abs" style="left:68.7px;top:412.44px" width="36.30" height="12.3" viewBox="0 0 36.30 12.3"><rect x="0" y="0" width="36.30" height="12.3" rx="1" fill="#2c5e96"/><text x="2.3" y="9.15" font-size="7.7" fill="#fff" stroke="#fff" stroke-width="0.3" textLength="31.70" lengthAdjust="spacingAndGlyphs">SCAL-yu7</text></svg>
<div class="abs" style="left:224.30px;top:415.67px;font-size:8.00px;line-height:8.00px;color:#2e2e2e;font-weight:normal;letter-spacing:-0.48px;white-space:nowrap;">domain.com</div>
<div class="abs" style="left:380.20px;top:415.67px;font-size:8.00px;line-height:8.00px;color:#2e2e2e;font-weight:normal;letter-spacing:-0.43px;white-space:nowrap;">Add To Cart</div>
<div class="abs" style="left:536.30px;top:415.67px;font-size:8.00px;line-height:8.00px;color:#2e2e2e;font-weight:normal;letter-spacing:-0.35px;white-space:nowrap;">2024-02-26 5:41 pm</div>
<div class="abs" style="left:692.20px;top:415.67px;font-size:8.00px;line-height:8.00px;color:#2e2e2e;font-weight:normal;letter-spacing:-0.45px;white-space:nowrap;">1 h 11 min</div>
<div class="abs" style="left:899.90px;top:415.67px;font-size:8.00px;line-height:8.00px;color:#2e2e2e;font-weight:normal;letter-spacing:-0.33px;white-space:nowrap;transform:translateX(-100%)">347,476</div>
<svg class="abs" style="left:913px;top:414.34px" width="8.5" height="8.5" viewBox="0 0 8.5 8.5"><circle cx="4.4" cy="4.2" r="4.05" fill="#1bd0bd"/><path d="M2.4,4.4 L3.7,5.6 L6.4,3" stroke="#fff" stroke-width="1.15" fill="none"/></svg>
<div class="row" style="top:456.32px"></div>
<svg class="abs" style="left:68.7px;top:438.02px" width="36.80" height="12.3" viewBox="0 0 36.80 12.3"><rect x="0" y="0" width="36.80" height="12.3" rx="1" fill="#2c5e96"/><text x="2.3" y="9.15" font-size="7.7" fill="#fff" stroke="#fff" stroke-width="0.3" textLength="32.20" lengthAdjust="spacingAndGlyphs">SCAL-p97</text></svg>
<div class="abs" style="left:224.30px;top:441.25px;font-size:8.00px;line-height:8.00px;color:#2e2e2e;font-weight:normal;letter-spacing:-0.48px;white-space:nowrap;">domain.com</div>
<div class="abs" style="left:380.20px;top:441.25px;font-size:8.00px;line-height:8.00px;color:#2e2e2e;font-weight:normal;letter-spacing:-0.43px;white-space:nowrap;">Add To Cart</div>
<div class="abs" style="left:536.30px;top:441.25px;font-size:8.00px;line-height:8.00px;color:#2e2e2e;font-weight:normal;letter-spacing:-0.35px;white-space:nowrap;">2024-02-27 4:39 pm</div>
<div class="abs" style="left:692.20px;top:441.25px;font-size:8.00px;line-height:8.00px;color:#2e2e2e;font-weight:normal;letter-spacing:-0.47px;white-space:nowrap;">50 min 15 sec</div>
<div class="abs" style="left:899.90px;top:441.25px;font-size:8.00px;line-height:8.00px;color:#2e2e2e;font-weight:normal;letter-spacing:-0.33px;white-space:nowrap;transform:translateX(-100%)">49,363</div>
<svg class="abs" style="left:913px;top:439.92px" width="8.5" height="8.5" viewBox="0 0 8.5 8.5"><circle cx="4.4" cy="4.2" r="4.05" fill="#1bd0bd"/><path d="M2.4,4.4 L3.7,5.6 L6.4,3" stroke="#fff" stroke-width="1.15" fill="none"/></svg>
<div class="row" style="top:481.90px"></div>
<svg class="abs" style="left:68.7px;top:463.60px" width="35.80" height="12.3" viewBox="0 0 35.80 12.3"><rect x="0" y="0" width="35.80" height="12.3" rx="1" fill="#2c5e96"/><text x="2.3" y="9.15" font-size="7.7" fill="#fff" stroke="#fff" stroke-width="0.3" textLength="31.20" lengthAdjust="spacingAndGlyphs">SCAL-tao</text></svg>
<div class="abs" style="left:224.30px;top:466.83px;font-size:8.00px;line-height:8.00px;color:#2e2e2e;font-weight:normal;letter-spacing:-0.48px;white-space:nowrap;">domain.com</div>
<div class="abs" style="left:380.20px;top:466.83px;font-size:8.00px;line-height:8.00px;color:#2e2e2e;font-weight:normal;letter-spacing:-0.43px;white-space:nowrap;">Add To Cart</div>
<div class="abs" style="left:536.30px;top:466.83px;font-size:8.00px;line-height:8.00px;color:#2e2e2e;font-weight:normal;letter-spacing:-0.35px;white-space:nowrap;">2024-02-27 6:32 pm</div>
<div class="abs" style="left:692.20px;top:466.83px;font-size:8.00px;line-height:8.00px;color:#2e2e2e;font-weight:normal;letter-spacing:-0.47px;white-space:nowrap;">16 min 15 sec</div>
<div class="abs" style="left:899.90px;top:466.83px;font-size:8.00px;line-height:8.00px;color:#2e2e2e;font-weight:normal;letter-spacing:-0.33px;white-space:nowrap;transform:translateX(-100%)">144,391</div>
<svg class="abs" style="left:913px;top:465.50px" width="8.5" height="8.5" viewBox="0 0 8.5 8.5"><circle cx="4.4" cy="4.2" r="4.05" fill="#1bd0bd"/><path d="M2.4,4.4 L3.7,5.6 L6.4,3" stroke="#fff" stroke-width="1.15" fill="none"/></svg>
<div class="row" style="top:507.48px"></div>
<svg class="abs" style="left:68.7px;top:489.18px" width="36.80" height="12.3" viewBox="0 0 36.80 12.3"><rect x="0" y="0" width="36.80" height="12.3" rx="1" fill="#2c5e96"/><text x="2.3" y="9.15" font-size="7.7" fill="#fff" stroke="#fff" stroke-width="0.3" textLength="32.20" lengthAdjust="spacingAndGlyphs">SCAL-5u4</text></svg>
<div class="abs" style="left:224.30px;top:492.41px;font-size:8.00px;line-height:8.00px;color:#2e2e2e;font-weight:normal;letter-spacing:-0.48px;white-space:nowrap;">domain.com</div>
<div class="abs" style="left:380.20px;top:492.41px;font-size:8.00px;line-height:8.00px;color:#2e2e2e;font-weight:normal;letter-spacing:-0.43px;white-space:nowrap;">Add To Cart</div>
<div class="abs" style="left:536.30px;top:492.41px;font-size:8.00px;line-height:8.00px;color:#2e2e2e;font-weight:normal;letter-spacing:-0.35px;white-space:nowrap;">2024-02-28 5:20 pm</div>
<div class="abs" style="left:692.20px;top:492.41px;font-size:8.00px;line-height:8.00px;color:#2e2e2e;font-weight:normal;letter-spacing:-0.46px;white-space:nowrap;">2 h 48 min</div>
<div class="abs" style="left:899.90px;top:492.41px;font-size:8.00px;line-height:8.00px;color:#2e2e2e;font-weight:normal;letter-spacing:-0.33px;white-space:nowrap;transform:translateX(-100%)">506,343</div>
<svg class="abs" style="left:913px;top:491.08px" width="8.5" height="8.5" viewBox="0 0 8.5 8.5"><circle cx="4.4" cy="4.2" r="4.05" fill="#1bd0bd"/><path d="M2.4,4.4 L3.7,5.6 L6.4,3" stroke="#fff" stroke-width="1.15" fill="none"/></svg>
<div class="row" style="top:533.06px"></div>
<svg class="abs" style="left:68.7px;top:514.76px" width="39.70" height="12.3" viewBox="0 0 39.70 12.3"><rect x="0" y="0" width="39.70" height="12.3" rx="1" fill="#2c5e96"/><text x="2.3" y="9.15" font-size="7.7" fill="#fff" stroke="#fff" stroke-width="0.3" textLength="35.10" lengthAdjust="spacingAndGlyphs">SCAL-bbm</text></svg>
<div class="abs" style="left:224.30px;top:517.99px;font-size:8.00px;line-height:8.00px;color:#2e2e2e;font-weight:normal;letter-spacing:-0.48px;white-space:nowrap;">domain.com</div>
<div class="abs" style="left:380.20px;top:517.99px;font-size:8.00px;line-height:8.00px;color:#2e2e2e;font-weight:normal;letter-spacing:-0.43px;white-space:nowrap;">Add To Cart</div>
<div class="abs" style="left:536.30px;top:517.99px;font-size:8.00px;line-height:8.00px;color:#2e2e2e;font-weight:normal;letter-spacing:-0.35px;white-space:nowrap;">2024-02-29 3:58 pm</div>
<div class="abs" style="left:692.20px;top:517.99px;font-size:8.00px;line-height:8.00px;color:#2e2e2e;font-weight:normal;letter-spacing:-0.46px;white-space:nowrap;">1 h 02 min</div>
<div class="abs" style="left:899.90px;top:517.99px;font-size:8.00px;line-height:8.00px;color:#2e2e2e;font-weight:normal;letter-spacing:-0.33px;white-space:nowrap;transform:translateX(-100%)">263,120</div>
<svg class="abs" style="left:913px;top:516.66px" width="8.5" height="8.5" viewBox="0 0 8.5 8.5"><circle cx="4.4" cy="4.2" r="4.05" fill="#1bd0bd"/><path d="M2.4,4.4 L3.7,5.6 L6.4,3" stroke="#fff" stroke-width="1.15" fill="none"/></svg>
</body></html>
